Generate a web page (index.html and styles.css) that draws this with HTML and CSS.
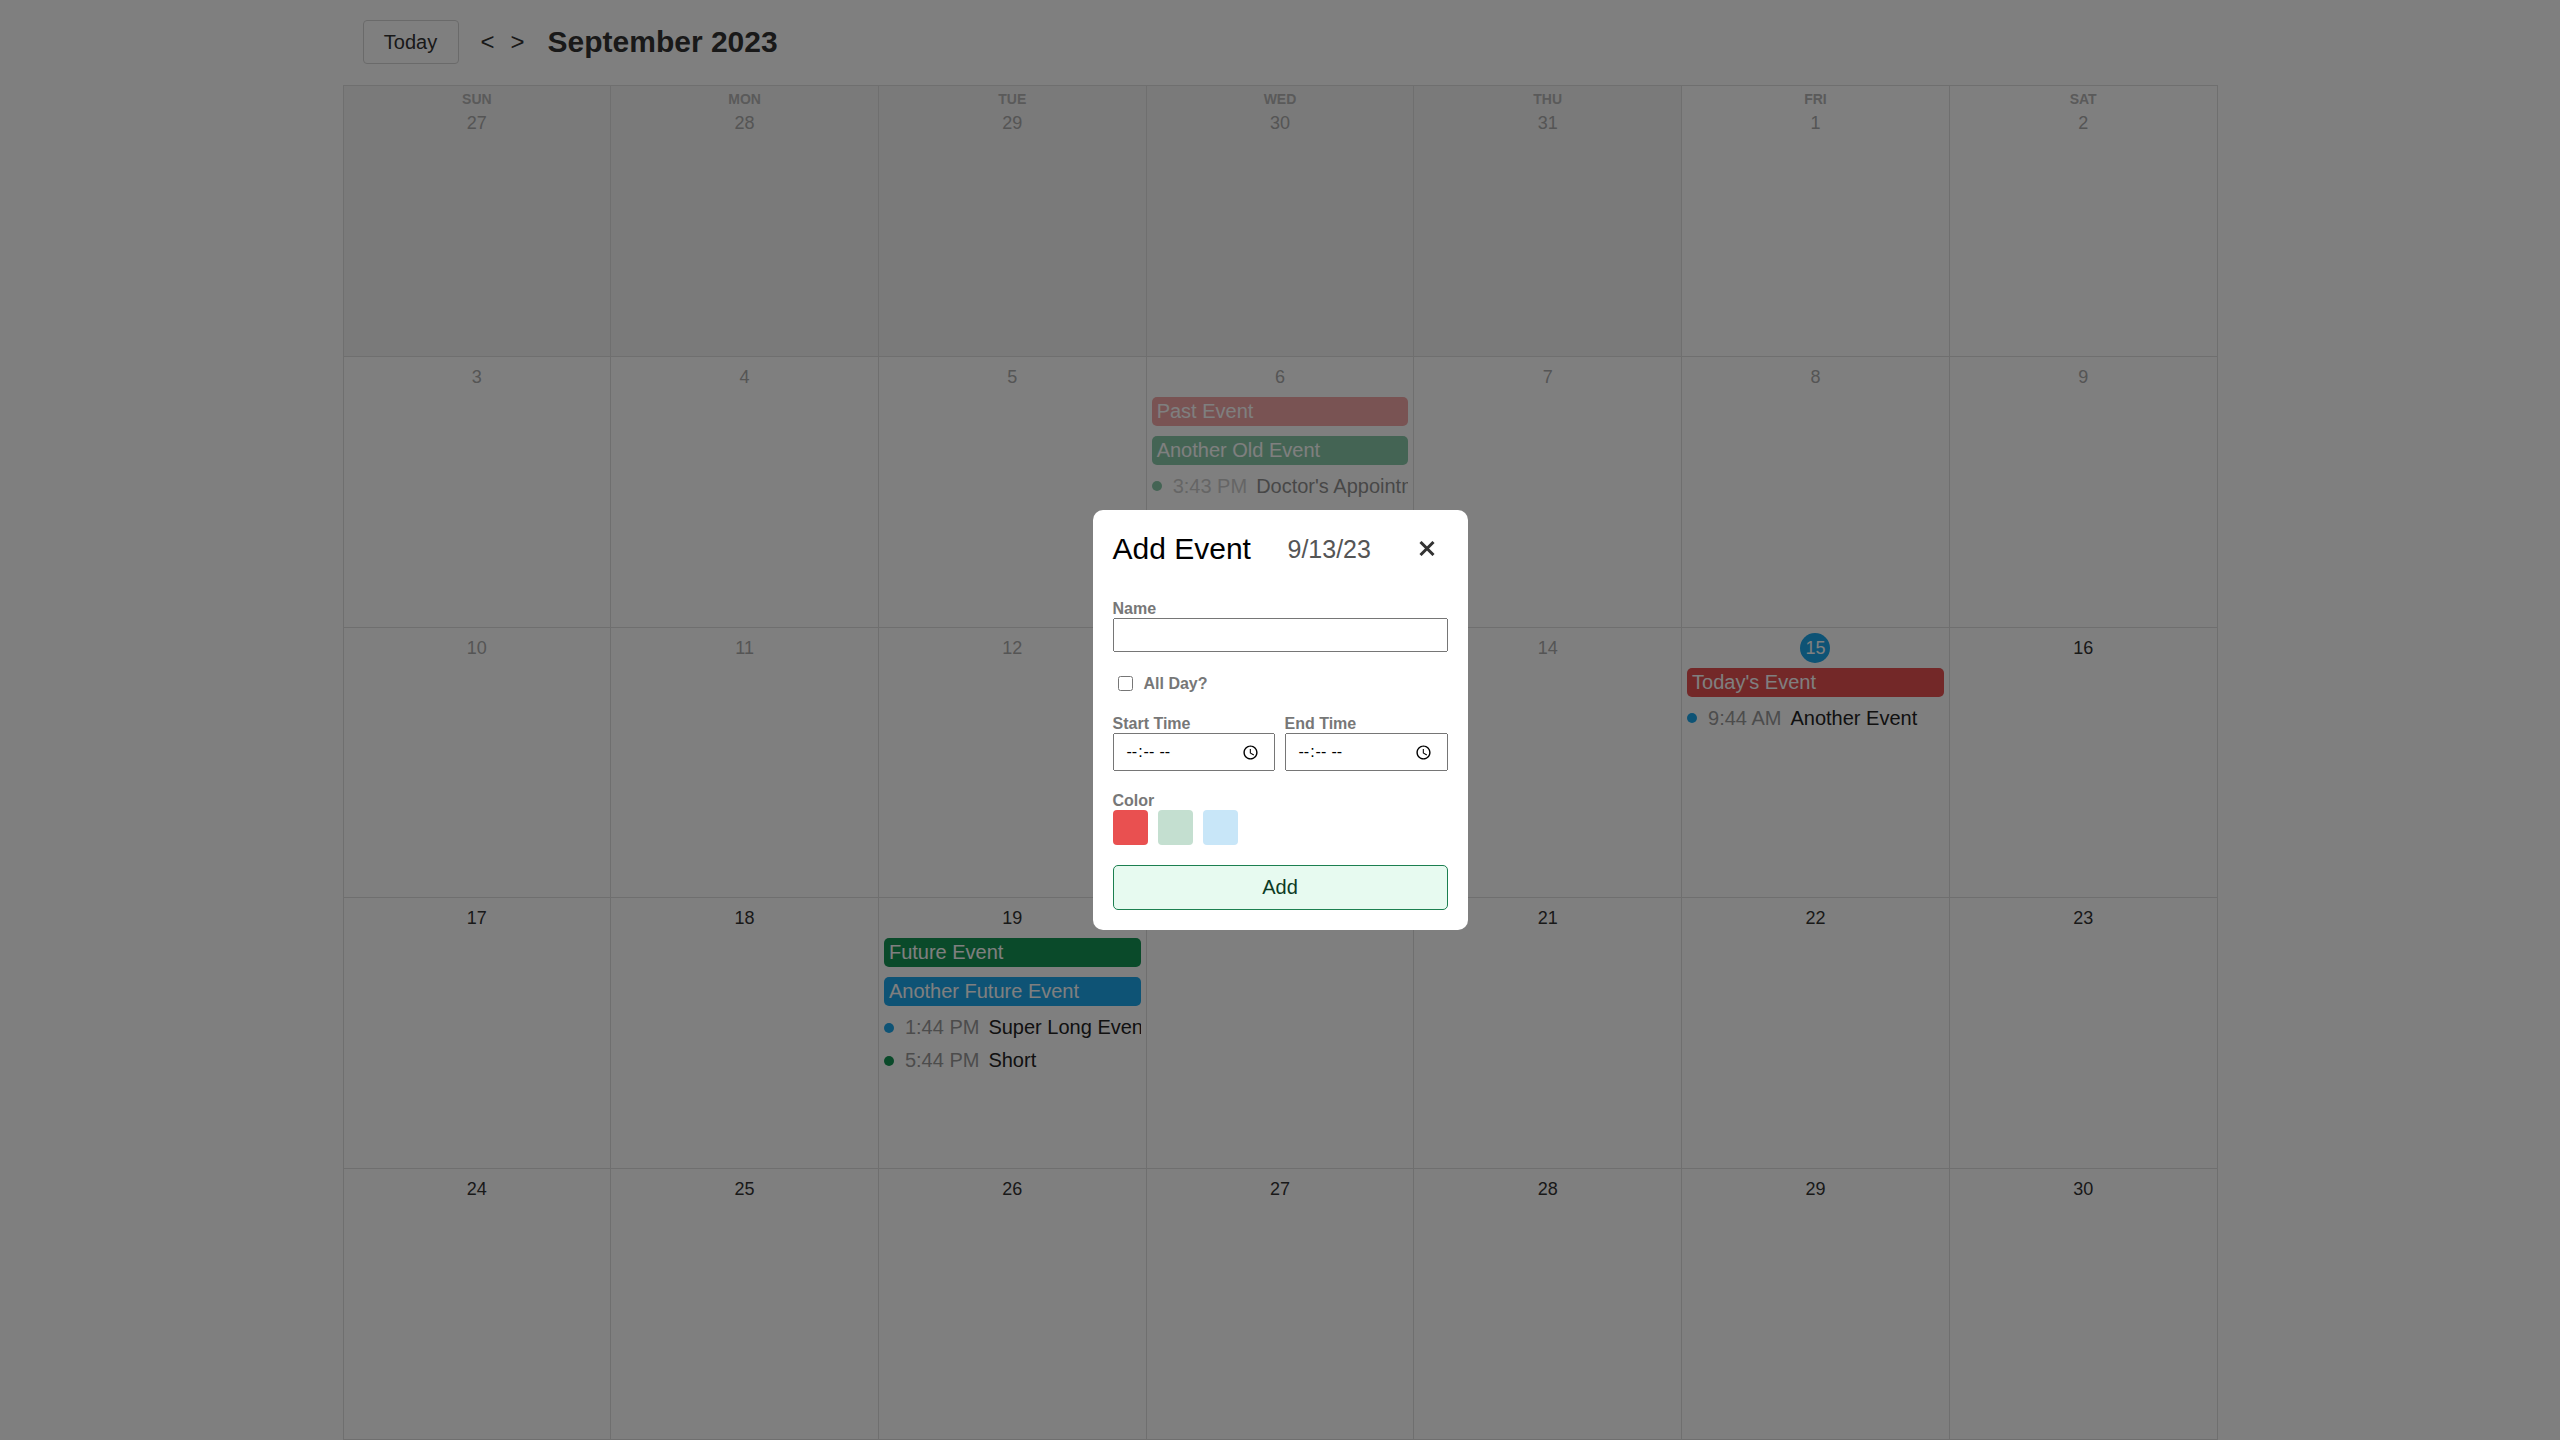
FILE: index.html
```html
<!DOCTYPE html>
<html>
	<head>
		<meta charset="UTF-8">
		<title>Calendar</title>
		<link rel="stylesheet" href="styles.css">
	</head>
	<body>
		<div class="calendar">
			<div class="header">
				<button class="btn today-btn">Today</button>
				<div class="month-nav">
					<button class="month-btn">&lt;</button>
					<button class="month-btn">&gt;</button>
				</div>
				<span class="month-title">September 2023</span>
			</div>
			<div class="days">
				<div class="day other-month past"><div class="day-name">Sun</div><div class="date">27</div></div>
				<div class="day other-month past"><div class="day-name">Mon</div><div class="date">28</div></div>
				<div class="day other-month past"><div class="day-name">Tue</div><div class="date">29</div></div>
				<div class="day other-month past"><div class="day-name">Wed</div><div class="date">30</div></div>
				<div class="day other-month past"><div class="day-name">Thu</div><div class="date">31</div></div>
				<div class="day past"><div class="day-name">Fri</div><div class="date">1</div></div>
				<div class="day past"><div class="day-name">Sat</div><div class="date">2</div></div>

				<div class="day past"><div class="date">3</div></div>
				<div class="day past"><div class="date">4</div></div>
				<div class="day past"><div class="date">5</div></div>
				<div class="day past">
					<div class="date">6</div>
					<div class="events">
						<div class="pill red">Past Event</div>
						<div class="pill green">Another Old Event</div>
						<div class="timed"><span class="dot dot-green"></span><span class="time">3:43 PM</span><span class="name">Doctor's Appointment</span></div>
					</div>
				</div>
				<div class="day past"><div class="date">7</div></div>
				<div class="day past"><div class="date">8</div></div>
				<div class="day past"><div class="date">9</div></div>

				<div class="day past"><div class="date">10</div></div>
				<div class="day past"><div class="date">11</div></div>
				<div class="day past"><div class="date">12</div></div>
				<div class="day past"><div class="date">13</div></div>
				<div class="day past"><div class="date">14</div></div>
				<div class="day">
					<div class="date is-today">15</div>
					<div class="events">
						<div class="pill red">Today's Event</div>
						<div class="timed"><span class="dot dot-blue"></span><span class="time">9:44 AM</span><span class="name">Another Event</span></div>
					</div>
				</div>
				<div class="day"><div class="date">16</div></div>

				<div class="day"><div class="date">17</div></div>
				<div class="day"><div class="date">18</div></div>
				<div class="day">
					<div class="date">19</div>
					<div class="events">
						<div class="pill green">Future Event</div>
						<div class="pill blue">Another Future Event</div>
						<div class="timed"><span class="dot dot-blue"></span><span class="time">1:44 PM</span><span class="name">Super Long Event Name</span></div>
						<div class="timed"><span class="dot dot-green"></span><span class="time">5:44 PM</span><span class="name">Short</span></div>
					</div>
				</div>
				<div class="day"><div class="date">20</div></div>
				<div class="day"><div class="date">21</div></div>
				<div class="day"><div class="date">22</div></div>
				<div class="day"><div class="date">23</div></div>

				<div class="day"><div class="date">24</div></div>
				<div class="day"><div class="date">25</div></div>
				<div class="day"><div class="date">26</div></div>
				<div class="day"><div class="date">27</div></div>
				<div class="day"><div class="date">28</div></div>
				<div class="day"><div class="date">29</div></div>
				<div class="day"><div class="date">30</div></div>
			</div>
		</div>

		<div class="overlay">
			<div class="modal">
				<div class="modal-title">
					<span class="modal-heading">Add Event</span>
					<span class="modal-date">9/13/23</span>
					<button class="close-btn">
						<svg width="16" height="15" viewBox="0 0 16 15"><path d="M1.5 1L14.5 14M14.5 1L1.5 14" stroke="#333" stroke-width="3" fill="none"/></svg>
					</button>
				</div>
				<form class="form">
					<div>
						<label class="label" for="name">Name</label>
						<input class="input" type="text" id="name">
					</div>
					<div class="check-row">
						<input class="check" type="checkbox" id="all-day">
						<label class="label" for="all-day">All Day?</label>
					</div>
					<div class="time-row">
						<div>
							<label class="label" for="start">Start Time</label>
							<input class="input input-time" type="time" id="start">
						</div>
						<div>
							<label class="label" for="end">End Time</label>
							<input class="input input-time" type="time" id="end">
						</div>
					</div>
					<div>
						<div class="label">Color</div>
						<div class="swatches">
							<span class="swatch swatch-red"></span>
							<span class="swatch swatch-green"></span>
							<span class="swatch swatch-blue"></span>
						</div>
					</div>
					<button class="add-btn" type="button">Add</button>
				</form>
			</div>
		</div>
	</body>
</html>
```

FILE: styles.css
```css
*{
	box-sizing: border-box;
}
body{
	margin: 0;
	height: 100vh;
	overflow: hidden;
	background: #fff;
	color: #333;
	font-family: "Liberation Sans", Arial, sans-serif;
}
button{
	font-family: inherit;
}

/* calendar */
.calendar{
	width: 1875px;
	height: 100%;
	margin: 0 auto;
	display: flex;
	flex-direction: column;
}
.header{
	height: 85px;
	flex-shrink: 0;
	padding: 0 20px 1px;
	display: flex;
	align-items: center;
	gap: 22px;
}
.btn{
	width: 96px;
	height: 44px;
	font-size: 20px;
	color: #333;
	background: none;
	border: 1px solid #d5d5d5;
	border-radius: 4px;
}
.month-nav{
	display: flex;
	gap: 16px;
}
.month-btn{
	padding: 0;
	font-size: 24px;
	color: #333;
	background: none;
	border: none;
}
.month-title{
	font-size: 30px;
	font-weight: bold;
	margin-left: 1px;
}
.days{
	flex: 1;
	min-height: 0;
	display: grid;
	grid-template-columns: repeat(7, minmax(0, 1fr));
	grid-template-rows: repeat(5, minmax(0, 1fr));
	border-top: 1px solid #dedede;
	border-left: 1px solid #dedede;
}
.day{
	min-width: 0;
	padding: 5px 5px 0;
	border-right: 1px solid #dedede;
	border-bottom: 1px solid #dedede;
}
.other-month{
	background: #f4f4f4;
}
.day-name{
	font-size: 14px;
	line-height: 17px;
	font-weight: bold;
	text-align: center;
	text-transform: uppercase;
	color: #b4b4b4;
}
.date{
	width: 30px;
	height: 30px;
	margin: 0 auto;
	font-size: 18px;
	line-height: 30px;
	text-align: center;
	color: #333;
}
.past .date{
	color: #aaa;
}
.date.is-today{
	color: #fff;
	background: #1ca6ea;
	border-radius: 50%;
}

/* events */
.events{
	margin-top: 5px;
	display: flex;
	flex-direction: column;
	gap: 10px;
}
.pill{
	height: 29px;
	padding: 0 5px;
	font-size: 20px;
	line-height: 29px;
	color: #fff;
	white-space: nowrap;
	overflow: hidden;
	border-radius: 5px;
}
.red{
	background: #e65050;
}
.green{
	background: #159455;
}
.blue{
	background: #1ca6ea;
}
.past .pill, .past .timed{
	opacity: 0.5;
}
.timed{
	height: 23px;
	font-size: 20px;
	line-height: 23px;
	display: flex;
	align-items: center;
	white-space: nowrap;
	overflow: hidden;
}
.dot{
	width: 10px;
	height: 10px;
	flex-shrink: 0;
	margin-right: 11px;
	border-radius: 50%;
}
.dot-blue{
	background: #1ca6ea;
}
.dot-green{
	background: #159455;
}
.time{
	margin-right: 9px;
	color: #999;
}
.name{
	color: #222;
}

/* modal */
.overlay{
	position: fixed;
	top: 0;
	left: 0;
	right: 0;
	bottom: 0;
	display: flex;
	align-items: center;
	justify-content: center;
	background: rgba(0,0,0,0.5);
}
.modal{
	width: 375px;
	height: 420px;
	padding: 20px;
	background: #fff;
	border-radius: 10px;
}
.modal-title{
	height: 35px;
	padding-top: 2px;
	margin-bottom: 34px;
	display: flex;
	align-items: center;
	justify-content: space-between;
}
.modal-heading{
	font-size: 30px;
	color: #000;
}
.modal-date{
	font-size: 25px;
	padding-top: 1px;
	color: #555;
}
.close-btn{
	width: 40px;
	padding: 0;
	display: flex;
	align-items: center;
	justify-content: center;
	background: none;
	border: none;
}
.form{
	display: flex;
	flex-direction: column;
	gap: 20px;
}
.label{
	display: block;
	font-size: 16px;
	font-weight: bold;
	line-height: 19px;
	color: #777;
}
.input{
	display: block;
	width: 100%;
	height: 34px;
	margin: 0;
}
.input-time{
	height: 38px;
	padding: 1px 11px 0;
	font-family: "Liberation Sans", Arial, sans-serif;
	font-size: 16px;
	letter-spacing: 0.6px;
}
.check-row{
	height: 22px;
	padding-left: 5px;
	display: flex;
	align-items: center;
	gap: 11px;
}
.check{
	width: 15px;
	height: 15px;
	margin: 0;
}
.time-row{
	display: grid;
	grid-template-columns: 162px 163px;
	gap: 10px;
}
.swatches{
	display: flex;
	gap: 10px;
}
.swatch{
	width: 35px;
	height: 35px;
	border-radius: 4px;
}
.swatch-red{
	background: #e95050;
}
.swatch-green{
	background: #c4dfd0;
}
.swatch-blue{
	background: #c8e6f8;
}
.add-btn{
	height: 45px;
	padding: 0;
	font-size: 20px;
	color: #0c3a25;
	background: #e7faf0;
	border: 1px solid #1c7f50;
	border-radius: 5px;
}
```
